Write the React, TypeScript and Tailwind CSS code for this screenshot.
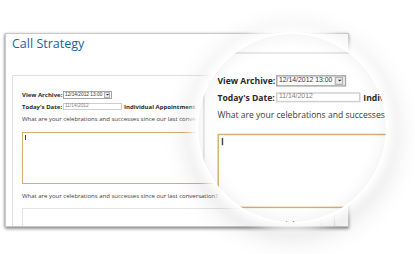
import React from 'react';

function Card() {
  return (
    <div className="flex h-[194px] w-[344px] flex-col overflow-hidden border border-[#c9c9c9] bg-white shadow-[0_2px_3px_rgba(0,0,0,0.4),-1px_0_2px_rgba(0,0,0,0.18)]">
      {/* Header */}
      <h1 className="pl-[6px] pt-px text-[12.5px] leading-[18px] text-[#1d5f9f]">Call Strategy</h1>
      <div className="mx-[6px] mt-[10px] h-px bg-[#e8e8e8]" />

      {/* Form panel */}
      <div className="ml-[6px] mt-[12px] w-[323px] flex-1 border-x border-t border-[#e0e0e0] pl-[9px] pt-[15px] text-[#2a2a2a]">
        <div className="flex h-[8px] items-center">
          <span className="w-[41px] whitespace-nowrap text-[6px] font-bold leading-none">View Archive:</span>
          <div className="flex h-[8px] w-[49px] items-center border border-[#a5a5a5] bg-white">
            <span className="flex-1 pl-px font-['Liberation_Sans',sans-serif] text-[4.8px] leading-none text-[#333]">
              12/14/2012 13:00
            </span>
            <div className="mr-px flex h-[6px] w-[6px] items-center justify-center border border-[#b3b3b3] bg-[#ececec]">
              <svg viewBox="0 0 4 2" className="h-[1.5px] w-[3px]">
                <path d="M0 0h4L2 2z" fill="#222" />
              </svg>
            </div>
          </div>
        </div>

        <div className="mt-[4px] flex h-[7px] items-center">
          <span className="w-[41px] whitespace-nowrap text-[6px] font-bold leading-none">Today's Date:</span>
          <div className="flex h-[7px] w-[59px] items-center border border-[#cfcfcf] pl-px font-['Liberation_Sans',sans-serif] text-[4.8px] leading-none text-[#808080]">
            11/14/2012
          </div>
          <span className="ml-[2px] whitespace-nowrap text-[6px] font-bold leading-none">Individual Appointment</span>
        </div>

        <p className="mt-[5px] whitespace-nowrap text-[6px] leading-[8px] text-[#3a3a3a]">
          What are your celebrations and successes since our last conversation?
        </p>
        <div className="mt-[9px] h-[52px] w-[300px] border border-[#d4b06a] pl-[1.5px] pt-[1.5px]">
          <div className="h-[5px] w-px bg-[#444]" />
        </div>

        <p className="mt-[8px] whitespace-nowrap text-[6px] leading-[8px] text-[#3a3a3a]">
          What are your celebrations and successes since our last conversation?
        </p>
        <div className="mt-[8px] h-[40px] w-[300px] border border-[#e3e3e3]" />
      </div>
    </div>
  );
}

function Scene() {
  return (
    <div className="h-[254px] w-[415px] pl-[5px] pt-[33px]">
      <Card />
    </div>
  );
}

export default function App() {
  return (
    <div className="relative h-[254px] w-[415px] overflow-hidden bg-white font-['Open_Sans',sans-serif]">
      <Scene />

      {/* Magnifier lens */}
      <div className="absolute left-[196px] top-[32px] h-[192px] w-[192px] overflow-hidden rounded-full border-2 border-white bg-white shadow-[0_0_8px_6px_rgba(255,255,255,0.95),0_6px_30px_4px_rgba(0,0,0,0.15)]">
        <div className="absolute left-[-12.5px] top-[-89.5px] origin-top-left scale-[1.43]">
          <Scene />
        </div>
        <div className="absolute inset-0 rounded-full shadow-[inset_0_0_18px_rgba(0,0,0,0.07)]" />
      </div>
    </div>
  );
}
